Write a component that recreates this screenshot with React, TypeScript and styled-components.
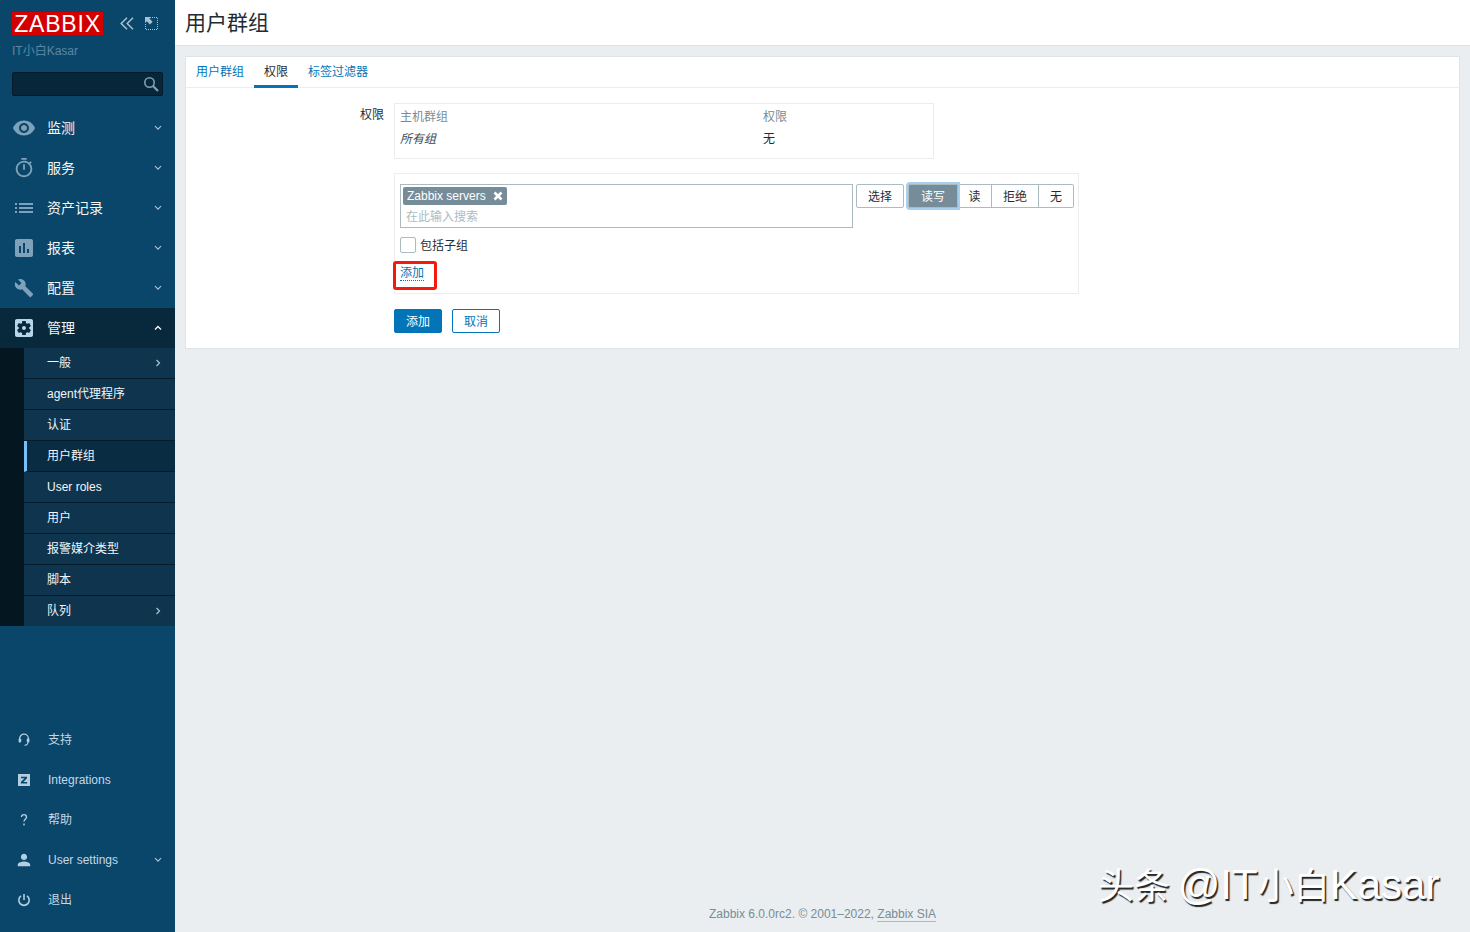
import { type FC, type ReactNode } from "react";
import styled, { createGlobalStyle } from "styled-components";

const FONT = `"Liberation Sans", Arial, "Noto Sans CJK SC", sans-serif`;

const GlobalStyle = createGlobalStyle`
  html, body {
    margin: 0;
    padding: 0;
    height: 100%;
    overflow: hidden;
  }
  body {
    font-family: ${FONT};
    font-size: 12px;
    line-height: 14px;
    color: #1f2c33;
    background: #ebeef0;
  }
  * {
    box-sizing: border-box;
  }
`;

const Page = styled.div`
  position: relative;
  display: flex;
  width: 1470px;
  height: 932px;
  overflow: hidden;
`;

const Sidebar = styled.aside`
  width: 175px;
  flex: none;
  display: flex;
  flex-direction: column;
  background: #0a466a;
`;

const BrandRow = styled.div`
  display: flex;
  align-items: center;
  padding: 12px 0 0 12px;
`;

const Logo = styled.div`
  width: 91px;
  height: 23px;
  background: #d40000;
  color: #fff;
  font-size: 23px;
  line-height: 24px;
  letter-spacing: 0.8px;
  text-align: center;
  white-space: nowrap;
`;

const BrandActions = styled.div`
  display: flex;
  align-items: center;
  gap: 11px;
  margin-left: 17px;
  color: #a9c2d3;
`;

const ServerName = styled.div`
  margin: 9px 0 0 12px;
  height: 14px;
  color: #5c87a3;
`;

const SearchBox = styled.div`
  position: relative;
  margin: 14px 12px 0;
  height: 24px;
  background: #08263a;
  border: 1px solid #041a28;
  border-radius: 2px;
  color: #7f9fb3;
`;

const SearchIcon = styled.span`
  position: absolute;
  right: 2px;
  top: 2px;
  display: flex;
`;

const Nav = styled.nav`
  margin-top: 12px;
`;

const NavRow = styled.div<{ $open?: boolean }>`
  display: flex;
  align-items: center;
  height: 40px;
  padding: 0 13px 0 12px;
  background: ${(p) => (p.$open ? "#08283c" : "transparent")};
  color: #f2f6f8;
  font-size: 14px;
`;

const NavIcon = styled.span<{ $open?: boolean }>`
  width: 24px;
  height: 24px;
  margin-right: 11px;
  flex: none;
  display: flex;
  align-items: center;
  justify-content: center;
  color: ${(p) => (p.$open ? "#b8d6ea" : "#7ea2ba")};
`;

const NavLabel = styled.span`
  flex: 1;
`;

const Arrow = styled.span`
  display: flex;
  color: #a9c2d3;
`;

const SubWrap = styled.div`
  padding-left: 24px;
  background: #04161f;
`;

const SubRow = styled.div<{ $active?: boolean }>`
  display: flex;
  align-items: center;
  height: 31px;
  padding: 0 14px 0 ${(p) => (p.$active ? "20px" : "23px")};
  background: ${(p) => (p.$active ? "#0a2c42" : "#0f344e")};
  border-bottom: 1px solid #051c2b;
  border-left: ${(p) => (p.$active ? "3px solid #75c1f5" : "none")};
  color: #f2f6f8;
  font-size: 12px;

  &:last-child {
    height: 30px;
    border-bottom: none;
  }
`;

const SubLabel = styled.span`
  flex: 1;
`;

const BottomNav = styled.div`
  margin-top: auto;
  padding-bottom: 12px;
`;

const BottomRow = styled.div`
  display: flex;
  align-items: center;
  height: 40px;
  padding: 0 13px 0 17px;
  color: #c4d8e6;
`;

const BottomIcon = styled.span`
  width: 31px;
  flex: none;
  display: flex;
  align-items: center;
  color: #b2cee0;
`;

const Main = styled.main`
  flex: 1;
  min-width: 0;
  display: flex;
  flex-direction: column;
`;

const Header = styled.header`
  height: 46px;
  flex: none;
  padding-left: 10px;
  background: #fff;
  border-bottom: 1px solid #dfe4e7;
  font-size: 21px;
  line-height: 46px;
  color: #1f2c33;
`;

const Card = styled.section`
  margin: 10px 10px 0 10px;
  height: 293px;
  background: #fff;
  border: 1px solid #dfe4e7;
`;

const Tabs = styled.div`
  display: flex;
  height: 31px;
  border-bottom: 1px solid #ebeef0;
`;

const Tab = styled.div<{ $active?: boolean }>`
  height: 31px;
  padding: 0 10px;
  line-height: 30px;
  color: ${(p) => (p.$active ? "#1f2c33" : "#0275b8")};
  border-bottom: 3px solid ${(p) => (p.$active ? "#0275b8" : "transparent")};
`;

const FormGrid = styled.div`
  display: grid;
  grid-template-columns: 198px 1fr;
  column-gap: 10px;
  padding-top: 15px;
`;

const FieldLabel = styled.div`
  text-align: right;
  line-height: 24px;
`;

const FieldBody = styled.div`
  display: flex;
  flex-direction: column;
  align-items: flex-start;
`;

const RightsTable = styled.div`
  width: 540px;
  height: 56px;
  padding: 2px 5px 0;
  border: 1px solid #ebeef0;
  display: grid;
  grid-template-columns: 363px 1fr;
  grid-auto-rows: 22px;
  align-items: center;
`;

const HeadCell = styled.div`
  color: #768d99;
`;

const GroupCell = styled.div`
  font-style: italic;
  color: #3a4a53;
`;

const AddBox = styled.div`
  position: relative;
  width: 685px;
  height: 121px;
  margin-top: 14px;
  padding: 10px 0 0 5px;
  border: 1px solid #ebeef0;
`;

const PickerRow = styled.div`
  display: flex;
  align-items: flex-start;
`;

const MultiSelect = styled.div`
  width: 453px;
  height: 44px;
  flex: none;
  padding: 2px;
  border: 1px solid #acbbc2;
`;

const Chip = styled.div`
  display: inline-flex;
  align-items: center;
  height: 18px;
  padding: 0 4px;
  gap: 7px;
  background: #768d99;
  color: #fff;
  border-radius: 2px;
`;

const Placeholder = styled.div`
  margin: 4px 0 0 3px;
  line-height: 16px;
  color: #acbbc2;
`;

const SelectButton = styled.div`
  width: 48px;
  height: 24px;
  flex: none;
  margin-left: 3px;
  border: 1px solid #acbbc2;
  border-radius: 2px;
  text-align: center;
  line-height: 24px;
`;

const Segments = styled.div`
  display: flex;
  flex: none;
  margin-left: 4px;
  height: 24px;
`;

const Segment = styled.div<{ $on?: boolean; $width: number }>`
  position: relative;
  width: ${(p) => p.$width}px;
  text-align: center;
  line-height: 24px;
  border: 1px solid #acbbc2;
  border-left-width: 0;
  color: ${(p) => (p.$on ? "#fff" : "#1f2c33")};
  background: ${(p) => (p.$on ? "#768d99" : "#fff")};
  box-shadow: ${(p) => (p.$on ? "0 0 0 2px #a6d0f0" : "none")};

  &:first-child {
    border-left-width: 1px;
    border-radius: 2px 0 0 2px;
    z-index: 1;
  }
  &:last-child {
    border-radius: 0 2px 2px 0;
  }
`;

const CheckRow = styled.div`
  display: flex;
  align-items: flex-start;
  gap: 4px;
  margin-top: 9px;
  height: 16px;
  line-height: 18px;
`;

const Checkbox = styled.span`
  width: 16px;
  height: 16px;
  border: 1px solid #acbbc2;
  border-radius: 2px;
`;

const LinkAdd = styled.div`
  display: inline-block;
  margin-top: 13px;
  color: #0275b8;
  line-height: 14px;
  border-bottom: 1px dotted #0275b8;
`;

const Highlight = styled.div`
  position: absolute;
  left: -2px;
  top: 87px;
  width: 44px;
  height: 29px;
  border: 3px solid #f41a0c;
  border-radius: 3px;
`;

const Actions = styled.div`
  display: flex;
  gap: 10px;
  margin-top: 15px;
`;

const FormButton = styled.div<{ $primary?: boolean }>`
  width: 48px;
  height: 24px;
  border: 1px solid #0275b8;
  border-radius: 2px;
  text-align: center;
  line-height: 24px;
  background: ${(p) => (p.$primary ? "#0275b8" : "#fff")};
  color: ${(p) => (p.$primary ? "#fff" : "#0275b8")};
`;

const Footer = styled.footer`
  margin-top: auto;
  height: 25px;
  text-align: center;
  color: #768d99;
`;

const FooterLink = styled.span`
  border-bottom: 1px solid #acbbc2;
`;

const Watermark = styled.div`
  position: absolute;
  left: 1098px;
  top: 860px;
  font-size: 42px;
  line-height: 50px;
  white-space: nowrap;
  word-spacing: -4px;
  color: #fff;
  text-shadow: 1.5px 1.5px 1px #222;
`;

const WatermarkCjk = styled.span`
  font-size: 36px;
`;

type GlyphProps = { d: string; size?: number; box?: string };

const Glyph: FC<GlyphProps> = ({ d, size = 24, box = "0 0 24 24" }) => (
  <svg width={size} height={size} viewBox={box} fill="currentColor">
    <path d={d} fillRule="evenodd" />
  </svg>
);

const Down = () => (
  <svg width="8" height="6" viewBox="0 0 8 6" fill="none" stroke="currentColor" strokeWidth="1.2">
    <path d="M1 1.2 4 4.2 7 1.2" />
  </svg>
);

const Up = () => (
  <svg width="8" height="6" viewBox="0 0 8 6" fill="none" stroke="#f2f6f8" strokeWidth="1.4">
    <path d="M1 4.6 4 1.6 7 4.6" />
  </svg>
);

const Right = () => (
  <svg width="6" height="8" viewBox="0 0 6 8" fill="none" stroke="currentColor" strokeWidth="1.2">
    <path d="M1.5 1 4.5 4 1.5 7" />
  </svg>
);

const ICONS = {
  eye: "M12 4.5C7 4.5 2.73 7.61 1 12c1.73 4.39 6 7.5 11 7.5s9.27-3.11 11-7.5c-1.73-4.39-6-7.5-11-7.5zM12 17c-2.76 0-5-2.24-5-5s2.24-5 5-5 5 2.24 5 5-2.24 5-5 5zm0-8c-1.66 0-3 1.34-3 3s1.34 3 3 3 3-1.34 3-3-1.34-3-3-3z",
  timer:
    "M15 1H9v2h6V1zm-4 13h2V8h-2v6zm8.03-6.61l1.42-1.42c-.43-.51-.9-.99-1.41-1.41l-1.42 1.42C16.07 4.74 14.12 4 12 4c-4.97 0-9 4.03-9 9s4.02 9 9 9 9-4.03 9-9c0-2.12-.74-4.07-1.97-5.61zM12 20c-3.87 0-7-3.13-7-7s3.13-7 7-7 7 3.13 7 7-3.13 7-7 7z",
  list: "M3 13h2v-2H3v2zm0 4h2v-2H3v2zm0-8h2V7H3v2zm4 4h14v-2H7v2zm0 4h14v-2H7v2zM7 7v2h14V7H7z",
  chart:
    "M19 3H5c-1.1 0-2 .9-2 2v14c0 1.1.9 2 2 2h14c1.1 0 2-.9 2-2V5c0-1.1-.9-2-2-2zM9 17H7v-7h2v7zm4 0h-2V7h2v10zm4 0h-2v-4h2v4z",
  wrench:
    "M22.7 19l-9.1-9.1c.9-2.3.4-5-1.5-6.9-2-2-5-2.4-7.4-1.3L9 6 6 9 1.6 4.7C.4 7.1.9 10.1 2.9 12.1c1.9 1.9 4.6 2.4 6.9 1.5l9.1 9.1c.4.4 1 .4 1.4 0l2.3-2.3c.5-.4.5-1.1.1-1.4z",
  gear: "M12 10c-1.1 0-2 .9-2 2s.9 2 2 2 2-.9 2-2-.9-2-2-2zm7-7H5c-1.11 0-2 .9-2 2v14c0 1.1.89 2 2 2h14c1.11 0 2-.9 2-2V5c0-1.1-.89-2-2-2zm-1.75 9c0 .23-.02.46-.05.68l1.48 1.16c.13.11.17.3.08.45l-1.4 2.42c-.09.15-.27.21-.43.15l-1.74-.7c-.36.28-.76.51-1.18.69l-.26 1.85c-.03.17-.18.3-.35.3h-2.8c-.17 0-.32-.13-.35-.29l-.26-1.85c-.43-.18-.82-.41-1.18-.69l-1.74.7c-.16.06-.34 0-.43-.15l-1.4-2.42c-.09-.15-.05-.34.08-.45l1.48-1.16c-.03-.23-.05-.46-.05-.69 0-.23.02-.46.05-.68l-1.48-1.16c-.13-.11-.17-.3-.08-.45l1.4-2.42c.09-.15.27-.21.43-.15l1.74.7c.36-.28.76-.51 1.18-.69l.26-1.85c.03-.17.18-.3.35-.3h2.8c.17 0 .32.13.35.29l.26 1.85c.43.18.82.41 1.18.69l1.74-.7c.16-.06.34 0 .43.15l1.4 2.42c.09.15.05.34-.08.45l-1.48 1.16c.03.23.05.46.05.69z",
  person:
    "M12 12c2.21 0 4-1.79 4-4s-1.79-4-4-4-4 1.79-4 4 1.79 4 4 4zm0 2c-2.67 0-8 1.34-8 4v2h16v-2c0-2.66-5.33-4-8-4z",
};

const Headset = () => (
  <svg width="14" height="14" viewBox="0 0 14 14" fill="none" stroke="currentColor">
    <path d="M2.6 7V5.6a4.4 4.4 0 0 1 8.8 0V7" strokeWidth="1.3" />
    <rect x="1.6" y="5.6" width="2.6" height="3.8" rx="1" fill="currentColor" stroke="none" />
    <rect x="9.8" y="5.6" width="2.6" height="3.8" rx="1" fill="currentColor" stroke="none" />
    <path d="M11 9c0 2-1.4 3.2-3.4 3.4" strokeWidth="1.1" />
  </svg>
);

const ZBadge = () => (
  <svg width="14" height="14" viewBox="0 0 14 14">
    <rect x="1" y="1" width="12" height="12" fill="currentColor" />
    <path d="M4 3.8h6v1.5L6.4 9h3.7v1.4H3.9V9l3.7-3.8H4z" fill="#0a466a" />
  </svg>
);

const Question = () => (
  <svg width="14" height="16" viewBox="0 0 14 16" fill="none" stroke="currentColor" strokeWidth="1.4">
    <path d="M4.5 5c0-3.2 5-3.2 5 0 0 2.2-2.5 2.2-2.5 4.6" />
    <path d="M7 11.5v2" />
  </svg>
);

const Power = () => (
  <svg width="14" height="14" viewBox="0 0 14 14" fill="none" stroke="currentColor" strokeWidth="1.6">
    <path d="M7 1v6" />
    <path d="M4 2.9a5.2 5.2 0 1 0 6 0" />
  </svg>
);

const CollapseIcon = () => (
  <svg width="14" height="13" viewBox="0 0 14 13" fill="none" stroke="currentColor" strokeWidth="1.5">
    <path d="M7 .8 1.2 6.5 7 12.2" />
    <path d="M13 .8 7.2 6.5 13 12.2" />
  </svg>
);

const KioskIcon = () => (
  <svg width="13" height="13" viewBox="0 0 13 13" fill="none" stroke="currentColor">
    <path d="M5 .5h7.5v12H.5V6" strokeDasharray="1 1" />
    <path d="M0 0h6L4.4 1.6 7.6 4.8 5 7.4 1.8 4.2 0 6z" fill="currentColor" stroke="none" />
  </svg>
);

const Magnifier = () => (
  <svg width="18" height="18" viewBox="0 0 18 18" fill="none" stroke="currentColor">
    <circle cx="7.5" cy="7.5" r="4.7" strokeWidth="1.6" />
    <path d="M11 11l5 5" strokeWidth="2.2" />
  </svg>
);

const ChipClose = () => (
  <svg width="10" height="10" viewBox="0 0 10 10" stroke="#fff" strokeWidth="2.6">
    <path d="M1.5 1.5l7 7M8.5 1.5l-7 7" />
  </svg>
);

const MAIN_MENU: { label: string; icon: ReactNode }[] = [
  { label: "监测", icon: <Glyph d={ICONS.eye} /> },
  { label: "服务", icon: <Glyph d={ICONS.timer} size={22} /> },
  { label: "资产记录", icon: <Glyph d={ICONS.list} /> },
  { label: "报表", icon: <Glyph d={ICONS.chart} /> },
  { label: "配置", icon: <Glyph d={ICONS.wrench} size={20} /> },
];

const SUB_MENU: { label: string; more?: boolean; active?: boolean }[] = [
  { label: "一般", more: true },
  { label: "agent代理程序" },
  { label: "认证" },
  { label: "用户群组", active: true },
  { label: "User roles" },
  { label: "用户" },
  { label: "报警媒介类型" },
  { label: "脚本" },
  { label: "队列", more: true },
];

const BOTTOM_MENU: { label: string; icon: ReactNode; more?: boolean }[] = [
  { label: "支持", icon: <Headset /> },
  { label: "Integrations", icon: <ZBadge /> },
  { label: "帮助", icon: <Question /> },
  {
    label: "User settings",
    icon: <Glyph d={ICONS.person} size={14} box="3 3 18 18" />,
    more: true,
  },
  { label: "退出", icon: <Power /> },
];

const App: FC = () => (
  <Page>
    <GlobalStyle />
    <Sidebar>
      <BrandRow>
        <Logo>ZABBIX</Logo>
        <BrandActions>
          <CollapseIcon />
          <KioskIcon />
        </BrandActions>
      </BrandRow>
      <ServerName>IT小白Kasar</ServerName>
      <SearchBox>
        <SearchIcon>
          <Magnifier />
        </SearchIcon>
      </SearchBox>
      <Nav>
        {MAIN_MENU.map((item) => (
          <NavRow key={item.label}>
            <NavIcon>{item.icon}</NavIcon>
            <NavLabel>{item.label}</NavLabel>
            <Arrow>
              <Down />
            </Arrow>
          </NavRow>
        ))}
        <NavRow $open>
          <NavIcon $open>
            <Glyph d={ICONS.gear} />
          </NavIcon>
          <NavLabel>管理</NavLabel>
          <Arrow>
            <Up />
          </Arrow>
        </NavRow>
        <SubWrap>
          {SUB_MENU.map((item) => (
            <SubRow key={item.label} $active={item.active}>
              <SubLabel>{item.label}</SubLabel>
              {item.more && (
                <Arrow>
                  <Right />
                </Arrow>
              )}
            </SubRow>
          ))}
        </SubWrap>
      </Nav>
      <BottomNav>
        {BOTTOM_MENU.map((item) => (
          <BottomRow key={item.label}>
            <BottomIcon>{item.icon}</BottomIcon>
            <NavLabel>{item.label}</NavLabel>
            {item.more && (
              <Arrow>
                <Down />
              </Arrow>
            )}
          </BottomRow>
        ))}
      </BottomNav>
    </Sidebar>
    <Main>
      <Header>用户群组</Header>
      <Card>
        <Tabs>
          <Tab>用户群组</Tab>
          <Tab $active>权限</Tab>
          <Tab>标签过滤器</Tab>
        </Tabs>
        <FormGrid>
          <FieldLabel>权限</FieldLabel>
          <FieldBody>
            <RightsTable>
              <HeadCell>主机群组</HeadCell>
              <HeadCell>权限</HeadCell>
              <GroupCell>所有组</GroupCell>
              <div>无</div>
            </RightsTable>
            <AddBox>
              <PickerRow>
                <MultiSelect>
                  <Chip>
                    Zabbix servers
                    <ChipClose />
                  </Chip>
                  <Placeholder>在此输入搜索</Placeholder>
                </MultiSelect>
                <SelectButton>选择</SelectButton>
                <Segments>
                  <Segment $on $width={50}>
                    读写
                  </Segment>
                  <Segment $width={34}>读</Segment>
                  <Segment $width={47}>拒绝</Segment>
                  <Segment $width={35}>无</Segment>
                </Segments>
              </PickerRow>
              <CheckRow>
                <Checkbox />
                包括子组
              </CheckRow>
              <LinkAdd>添加</LinkAdd>
              <Highlight />
            </AddBox>
            <Actions>
              <FormButton $primary>添加</FormButton>
              <FormButton>取消</FormButton>
            </Actions>
          </FieldBody>
        </FormGrid>
      </Card>
      <Footer>
        Zabbix 6.0.0rc2. © 2001–2022, <FooterLink>Zabbix SIA</FooterLink>
      </Footer>
    </Main>
    <Watermark>
      <WatermarkCjk>头条</WatermarkCjk> @IT<WatermarkCjk>小白</WatermarkCjk>Kasar
    </Watermark>
  </Page>
);

export default App;
